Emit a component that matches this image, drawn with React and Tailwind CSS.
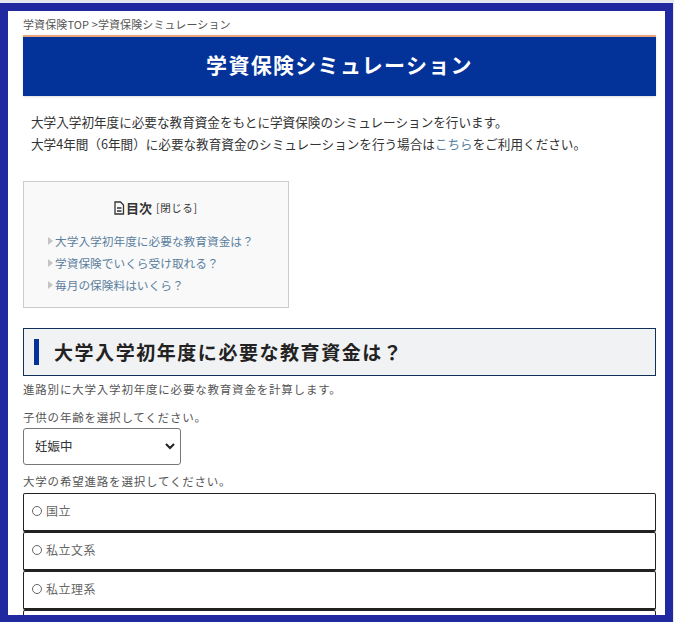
import React from "react";

const tocItems = [
  "大学入学初年度に必要な教育資金は？",
  "学資保険でいくら受け取れる？",
  "毎月の保険料はいくら？",
];

const courses = ["国立", "私立文系", "私立理系", ""];

const App = () => {
  return (
    <div className="w-[674px] h-[622px] overflow-hidden bg-[#e6e8ee] pt-[3px] pr-px font-['Noto_Sans_CJK_JP','Noto_Sans',sans-serif] text-[#333]">
      <div className="h-[619px] bg-[#2029a0] pt-2 px-2 pb-[6px]">
        <div className="h-[604px] overflow-hidden bg-white px-[15px] pt-[6px] pr-[9px]">
          <p className="h-[18px] text-[11px] leading-[15px] tracking-[0.1px] text-[#555]">学資保険TOP &gt;学資保険シミュレーション</p>

          <h1 className="h-[61px] border-t-2 border-[#e8a27c] bg-[#033399] text-center text-[21px] leading-[55px] font-bold tracking-[1.3px] text-white shadow-sm">
            学資保険シミュレーション
          </h1>

          <div className="mt-[15px] pl-2 text-[12.6px] leading-[22px] text-[#333]">
            <p>大学入学初年度に必要な教育資金をもとに学資保険のシミュレーションを行います。</p>
            <p>
              大学4年間（6年間）に必要な教育資金のシミュレーションを行う場合は
              <span className="text-[#5b7f9e]">こちら</span>
              をご利用ください。
            </p>
          </div>

          <div className="mt-[26px] h-[127px] w-[266px] border border-[#ccc] bg-[#f9f9f9] pt-4 pl-6">
            <div className="flex items-center pl-[65px] text-[13px] leading-5 text-[#333]">
              <svg width="12" height="14" viewBox="0 0 12 14" fill="none" stroke="#333" strokeWidth="1.3">
                <path d="M2 1h5.500L10.500 4v9h-8.500z" />
                <path d="M4 7h4.500M4 10h4.500" />
              </svg>
              <span className="ml-[1px] font-bold">目次</span>
              <span className="ml-[4px] text-[10.5px] tracking-[0.6px]">[閉じる]</span>
            </div>
            <ul className="mt-[12px] text-[11.7px] leading-[22px] text-[#5b7f9e]">
              {tocItems.map(item => (
                <li key={item} className="flex items-center">
                  <span className="mr-[2px] h-0 w-0 border-y-[4px] border-l-[5px] border-y-transparent border-l-[#c4c4c4]" />
                  {item}
                </li>
              ))}
            </ul>
          </div>

          <h2 className="mt-5 flex h-[48px] items-center border border-[#12305c] bg-[#f1f2f3] pl-[10px] text-[19px] font-bold tracking-[1.55px] text-[#222]">
            <span className="mr-[15px] h-[26px] w-[5px] bg-[#033399]" />
            大学入学初年度に必要な教育資金は？
          </h2>

          <p className="mt-[5px] text-[11.5px] leading-[17px] tracking-[0.8px] text-[#555]">進路別に大学入学初年度に必要な教育資金を計算します。</p>
          <p className="mt-[11px] text-[11.5px] leading-[17px] tracking-[0.8px] text-[#555]">子供の年齢を選択してください。</p>

          <div className="relative mt-[2px] h-[37px] w-[158px]">
            <select className="block h-full w-full appearance-none rounded-[3px] border border-[#777] bg-white pl-[11px] text-[12.5px] text-[#333]">
              <option>妊娠中</option>
            </select>
            <svg className="pointer-events-none absolute top-[15px] right-[6px]" width="10" height="7" viewBox="0 0 10 7" fill="none" stroke="#222" strokeWidth="2">
              <path d="M1 1l4 4 4-4" />
            </svg>
          </div>

          <p className="mt-2 text-[11.5px] leading-[17px] tracking-[0.8px] text-[#555]">大学の希望進路を選択してください。</p>

          <div className="mt-[3px]">
            {courses.map(course => (
              <label key={course || "next"} className="flex h-[39px] items-start rounded-[2px] border border-[#222] border-b-2 pt-[9px] pl-2 text-[12px] leading-4 tracking-[0.5px] text-[#666]">
                <span className="mt-[3px] mr-1 h-[10px] w-[10px] rounded-full border border-[#666]" />
                {course}
              </label>
            ))}
          </div>
        </div>
      </div>
    </div>
  );
};

export default App;
